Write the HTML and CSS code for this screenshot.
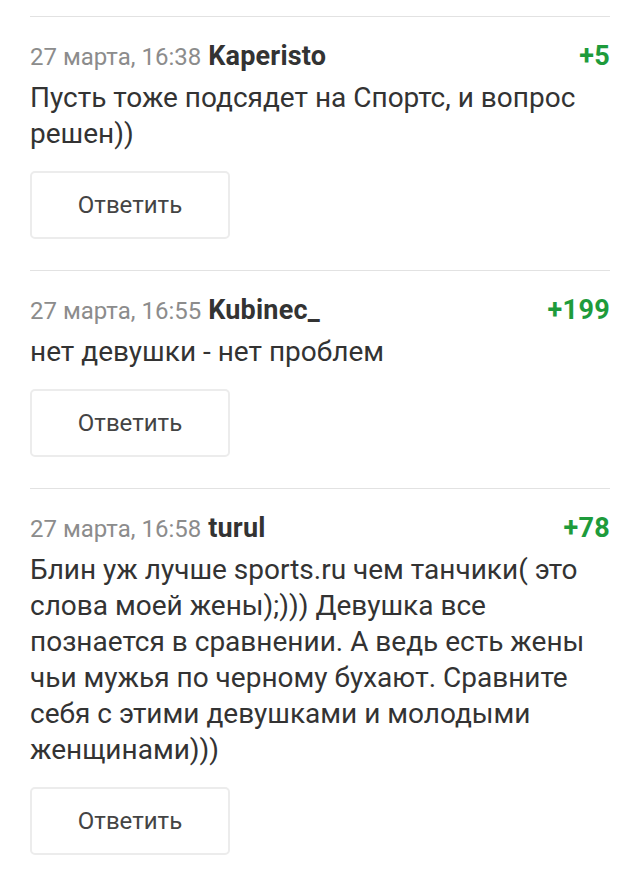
FILE: index.html
```html
<!DOCTYPE html>
<html lang="ru">
<head>
    <meta charset="UTF-8">
    <meta name="viewport" content="width=device-width, initial-scale=1.0">
    <title>Комментарии</title>
    <link rel="stylesheet" href="styles.css">
</head>
<body>
    <div class="comments">
        <div class="comment">
            <div class="head">
                <span class="date">27 марта, 16:38</span>
                <span class="author">Kaperisto</span>
                <span class="score">+5</span>
            </div>
            <div class="text">Пусть тоже подсядет на Спортс, и вопрос решен))</div>
            <button class="reply">Ответить</button>
        </div>
        <div class="comment">
            <div class="head">
                <span class="date">27 марта, 16:55</span>
                <span class="author">Kubinec_</span>
                <span class="score">+199</span>
            </div>
            <div class="text">нет девушки - нет проблем</div>
            <button class="reply">Ответить</button>
        </div>
        <div class="comment">
            <div class="head">
                <span class="date">27 марта, 16:58</span>
                <span class="author">turul</span>
                <span class="score">+78</span>
            </div>
            <div class="text">Блин уж лучше sports.ru чем танчики( это слова моей жены);))) Девушка все познается в сравнении. А ведь есть жены чьи мужья по черному бухают. Сравните себя с этими девушками и молодыми женщинами)))</div>
            <button class="reply">Ответить</button>
        </div>
    </div>
</body>
</html>
```

FILE: styles.css
```css
body{
    margin: 0;
    background: #fff;
    font-family: Roboto, "Noto Sans", sans-serif;
    color: #333;
}
.comments{
    padding: 16px 30px 0 30px;
}
.comment{
    border-top: 1px solid #e2e2e2;
    padding-top: 24px;
    margin-bottom: 31px;
}
.head{
    display: flex;
    align-items: baseline;
    height: 30px;
    font-size: 24px;
    line-height: 30px;
}
.date{
    color: #8c8c8c;
    margin-right: 7px;
}
.author{
    font-size: 27px;
    font-weight: bold;
    letter-spacing: 0.2px;
    color: #333;
}
.score{
    margin-left: auto;
    font-size: 27px;
    font-weight: bold;
    letter-spacing: 0.3px;
    color: #1e9b3b;
}
.text{
    margin-top: 9px;
    font-size: 28px;
    line-height: 36px;
    color: #333;
}
.reply{
    display: block;
    margin-top: 19px;
    width: 200px;
    height: 68px;
    background: #fff;
    border: 2px solid #ececec;
    border-radius: 5px;
    font-family: Roboto, "Noto Sans", sans-serif;
    font-size: 24px;
    color: #444;
}
```
